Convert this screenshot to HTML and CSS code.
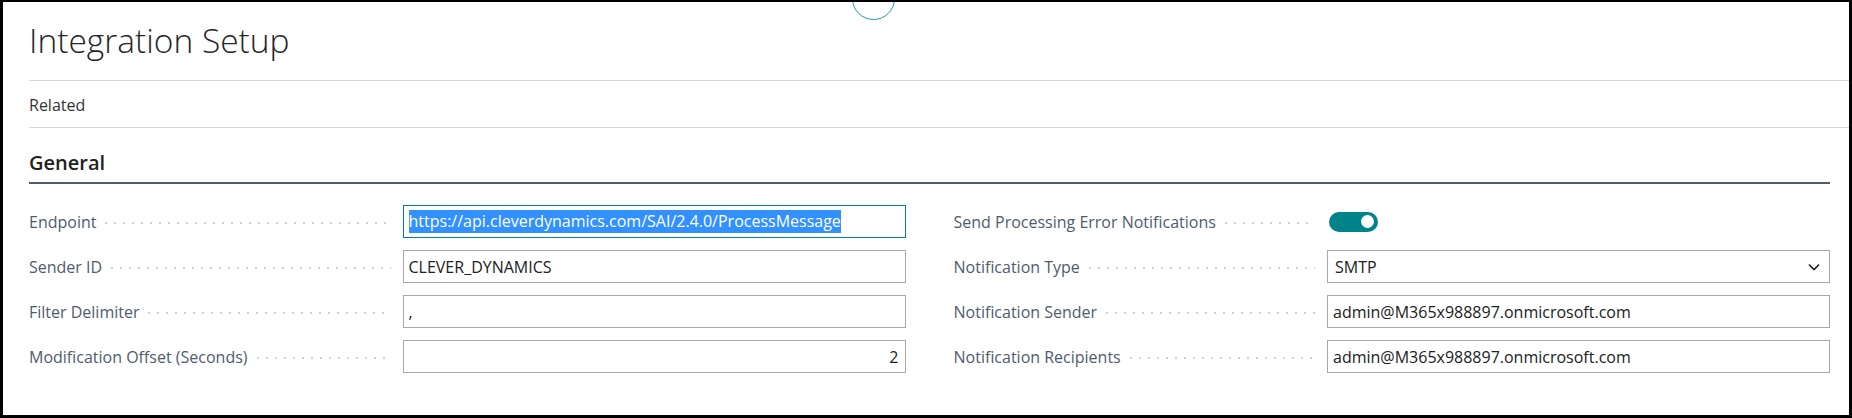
FILE: index.html
```html
<!DOCTYPE html>
<html lang="en">
<head>
<meta charset="utf-8">
<title>Integration Setup</title>
<link rel="stylesheet" href="styles.css">
</head>
<body>
<div class="frame">
  <div class="focus-ring"></div>
  <header class="page-head">
    <h1 class="title">Integration Setup</h1>
  </header>
  <nav class="actions">
    <span class="action">Related</span>
  </nav>
  <section class="group">
    <h2 class="group-title">General</h2>
    <div class="fields">
      <div class="col">
        <div class="field">
          <div class="caption"><span class="caption-text">Endpoint</span><span class="leader"></span></div>
          <div class="control input focused"><span class="selected">https://api.cleverdynamics.com/SAI/2.4.0/ProcessMessage</span></div>
        </div>
        <div class="field">
          <div class="caption"><span class="caption-text">Sender ID</span><span class="leader"></span></div>
          <div class="control input">CLEVER_DYNAMICS</div>
        </div>
        <div class="field">
          <div class="caption"><span class="caption-text">Filter Delimiter</span><span class="leader"></span></div>
          <div class="control input">,</div>
        </div>
        <div class="field">
          <div class="caption"><span class="caption-text">Modification Offset (Seconds)</span><span class="leader"></span></div>
          <div class="control input numeric">2</div>
        </div>
      </div>
      <div class="col">
        <div class="field">
          <div class="caption"><span class="caption-text">Send Processing Error Notifications</span><span class="leader"></span></div>
          <div class="control toggle-wrap"><span class="toggle"><span class="knob"></span></span></div>
        </div>
        <div class="field">
          <div class="caption"><span class="caption-text">Notification Type</span><span class="leader"></span></div>
          <div class="control input select"><span>SMTP</span>
            <svg class="chevron" width="12" height="8" viewBox="0 0 12 8"><path d="M1 1.5 L6 6.5 L11 1.5" fill="none" stroke="#212121" stroke-width="1.6"/></svg>
          </div>
        </div>
        <div class="field">
          <div class="caption"><span class="caption-text">Notification Sender</span><span class="leader"></span></div>
          <div class="control input">admin@M365x988897.onmicrosoft.com</div>
        </div>
        <div class="field">
          <div class="caption"><span class="caption-text">Notification Recipients</span><span class="leader"></span></div>
          <div class="control input">admin@M365x988897.onmicrosoft.com</div>
        </div>
      </div>
    </div>
  </section>
</div>
</body>
</html>
```

FILE: styles.css
```css
* { box-sizing: border-box; }

html, body {
  margin: 0;
  padding: 0;
  background: #ffffff;
}

body {
  font-family: "Open Sans", "Liberation Sans", sans-serif;
  color: #212121;
}

.frame {
  position: relative;
  overflow: hidden;
  width: 1852px;
  height: 418px;
  border-style: solid;
  border-color: #000000;
  border-width: 2px 3px 3px 3px;
  padding-left: 26px;
  background: #ffffff;
}

.focus-ring {
  position: absolute;
  left: 849px;
  top: -25px;
  width: 43px;
  height: 43px;
  border: 1px solid #1f9aa0;
  border-radius: 50%;
  background: #ffffff;
}

.page-head {
  padding: 16px 0 18px 0;
  border-bottom: 1px solid #d6d6d6;
}

.title {
  margin: 0;
  font-size: 33.5px;
  line-height: 44px;
  font-weight: 300;
  color: #262626;
  letter-spacing: 0;
}

.actions {
  padding: 14px 0 12px 0;
  border-bottom: 1px solid #d6d6d6;
}

.action {
  display: block;
  font-size: 16px;
  line-height: 20px;
  color: #333333;
}

.group {
  padding: 22px 19px 0 0;
}

.group-title {
  margin: 0;
  padding-bottom: 6px;
  border-bottom: 2px solid #505c6d;
  font-size: 20px;
  line-height: 26px;
  font-weight: 600;
  color: #212121;
}

.fields {
  display: flex;
  gap: 48px;
  margin-top: 21px;
}

.col {
  flex: 1 1 0;
  display: flex;
  flex-direction: column;
  gap: 12px;
}

.field {
  display: flex;
  align-items: center;
  height: 33px;
}

.caption {
  flex: 1 1 0;
  display: flex;
  align-items: center;
  min-width: 0;
}

.caption-text {
  font-size: 16px;
  line-height: 22px;
  color: #505c6d;
  white-space: nowrap;
}

.leader {
  flex: 1 1 0;
  height: 2px;
  margin: 3px 12px 0 9px;
  background-image: linear-gradient(to right, #d2d2d2 0 1.6px, transparent 1.6px);
  background-size: 9px 2px;
  background-repeat: repeat-x;
}

.control {
  width: 503px;
  height: 33px;
  flex: 0 0 503px;
}

.input {
  display: flex;
  align-items: center;
  padding: 0 6px 0 5px;
  border: 1px solid #a8a8a8;
  font-size: 16px;
  line-height: 22px;
  color: #212121;
  white-space: nowrap;
}

.input.focused {
  border-color: #00858a;
}

.selected {
  display: inline-block;
  line-height: 23px;
  background: #3390ff;
  color: #ffffff;
}

.input.numeric {
  justify-content: flex-end;
}

.input.select {
  justify-content: space-between;
  padding-left: 7px;
  padding-right: 9px;
}

.chevron {
  display: block;
}

.toggle-wrap {
  display: flex;
  align-items: center;
  padding-left: 2px;
}

.toggle {
  display: flex;
  align-items: center;
  justify-content: flex-end;
  width: 49px;
  height: 20px;
  padding-right: 4px;
  border-radius: 10px;
  background: #00848a;
}

.knob {
  display: block;
  width: 13px;
  height: 13px;
  border-radius: 50%;
  background: #ffffff;
}
```
